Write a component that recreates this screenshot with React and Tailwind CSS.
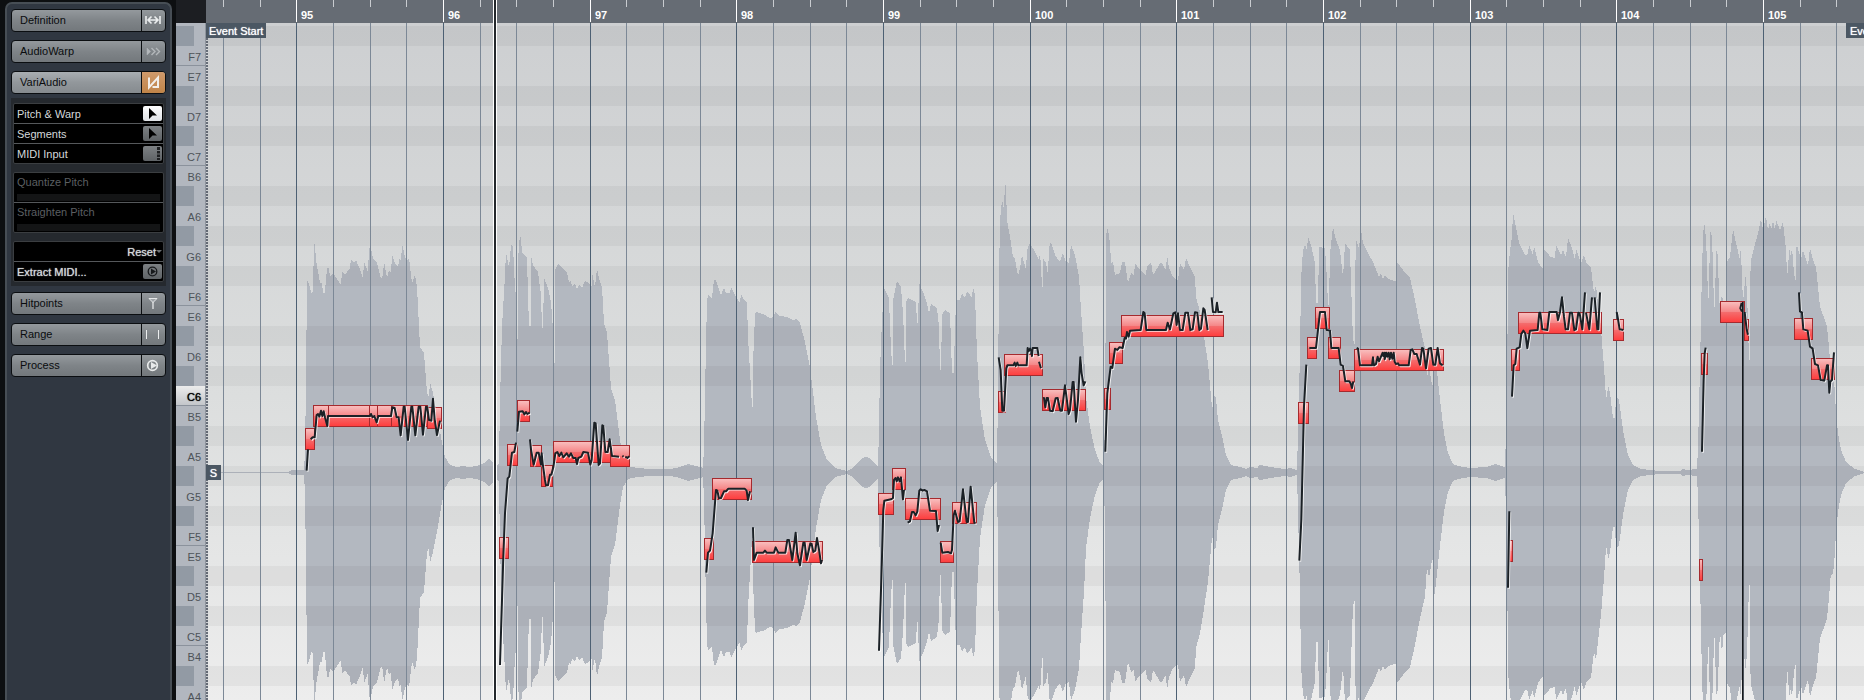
import React from "react";

/* Timeline geometry: the roll starts at x = 206, y = 23 of the window. */
const LEFT = 206;
const TOP = 23;
const MID = 472.5;
const beatX = (k) => 223 + Math.floor((k * 110) / 3 + 0.5);

/* One entry per grid line; every fourth one from the third opens a bar. */
const BEATS = Array.from({ length: 45 }, (_, k) => ({
  x: beatX(k),
  width: beatX(k + 1) - beatX(k),
  bar: k % 4 === 2 ? 95 + (k - 2) / 4 : null,
}));

const NAMES = ["B", "A#", "A", "G#", "G", "F#", "F", "E", "D#", "D", "C#", "C"];
const KEYS = Array.from({ length: 34 }, (_, i) => {
  const n = i + 5;
  return { name: NAMES[n % 12], octave: 7 - Math.floor(n / 12), y: 26 + i * 20 };
});

/* Upper edge of the waveform as x,y pairs; the lower edge mirrors it. */
const ENVELOPE = `208,472 288,472 292,470 304,470 305,452 306,382 307,280 309,284 312,295 313,290 314,242 315,245 316,260 320,283 322,283 323,293 325,293 326,277 328,265 330,276 333,273 337,279 341,285 342,271 345,275 350,268 351,259 354,263 356,260 359,267 361,272 363,279 364,262 368,272 369,248 371,248 373,258 377,263 381,279 383,275 384,261 387,278 389,270 391,273 392,255 395,263 398,267 400,257 401,262 402,244 403,248 405,257 407,260 409,258 412,283 415,275 417,287 420,347 424,353 427,393 429,397 430,382 433,393 437,413 442,443 445,457 450,465 457,467 462,466 470,467 480,465 484,463 489,459 493,463 496,468
499,463 500,400 502,327 505,275 506,252 509,268 511,245 513,247 514,267 515,288 516,295 517,339 518,339 518,260 520,234 521,240 522,252 527,258 528,295 529,326 531,326 531,255 533,265 538,272 541,295 542,328 543,328 544,278 548,288 551,302 553,330 554,363 555,363 555,270 558,264 563,268 567,273 569,282 571,280 572,287 575,283 577,289 579,285 582,288 585,281 587,282 590,285 592,287 592,273 595,287 597,269 600,282 602,287 604,323 607,333 611,388 615,400 620,440 623,458 628,466 637,468 650,469 670,469 680,467 688,464 700,467 703,468
704,447 706,343 707,302 708,295 712,298 714,280 716,280 718,287 721,295 724,288 726,293 730,293 731,287 735,295 740,303 741,294 744,300 747,302 748,337 751,388 752,407 753,407 753,363 755,315 756,312 765,315 770,318 774,317 775,312 780,316 787,317 793,320 797,319 800,323 805,342 810,367 816,417 821,445 827,460 835,468 847,471 853,468 860,460 865,457 870,458 875,464 878,467
879,427 880,370 882,320 884,288 889,298 890,327 892,365 893,365 893,300 897,281 901,287 903,313 905,362 906,362 906,302 908,298 916,302 917,323 918,323 919,283 923,292 927,303 929,313 931,304 937,308 939,327 940,370 941,370 942,315 945,310 950,313 951,343 952,373 954,373 955,320 957,300 960,300 962,293 965,298 967,291 970,295 972,298 973,287 975,295 977,353 980,407 985,440 991,457 997,464
998,393 999,277 1000,220 1002,200 1003,203 1004,211 1005,180 1006,190 1007,220 1010,237 1013,257 1015,259 1018,276 1020,268 1022,255 1026,270 1027,250 1030,243 1035,252 1039,260 1040,253 1041,267 1042,287 1043,287 1043,258 1046,263 1048,275 1049,248 1051,242 1055,255 1060,262 1063,253 1066,262 1069,263 1071,245 1075,255 1079,277 1081,310 1084,353 1086,397 1090,427 1095,450 1100,463 1104,467
1105,413 1106,277 1106,240 1107,227 1108,230 1110,243 1111,263 1113,261 1115,275 1120,273 1122,262 1125,262 1128,283 1131,273 1134,275 1135,263 1140,270 1146,275 1147,266 1151,262 1153,275 1158,267 1161,262 1166,270 1167,255 1169,268 1173,277 1178,280 1180,263 1184,270 1186,258 1190,267 1195,277 1196,297 1200,312 1203,330 1208,363 1212,407 1213,407 1214,395 1216,398 1218,420 1223,440 1226,455 1231,465 1240,467 1246,469 1250,467 1258,468 1259,465 1266,466 1270,467 1285,469 1290,468 1297,470
1298,433 1300,353 1301,280 1303,250 1305,245 1307,250 1308,236 1311,245 1315,263 1316,303 1318,303 1319,247 1325,248 1327,280 1328,305 1329,305 1330,253 1333,227 1336,240 1340,250 1343,278 1345,243 1350,250 1351,283 1353,340 1355,345 1355,280 1356,240 1359,248 1361,229 1363,243 1368,253 1373,262 1379,277 1381,273 1383,279 1385,275 1388,279 1395,281 1396,281 1397,262 1403,270 1410,278 1415,300 1420,327 1425,348 1427,378 1429,367 1432,385 1433,385 1434,347 1436,362 1440,400 1444,433 1448,453 1453,464 1458,466 1470,468 1486,467 1495,464 1505,467
1507,397 1508,273 1510,250 1512,237 1513,212 1516,227 1519,243 1525,255 1528,254 1529,245 1533,255 1534,246 1538,262 1542,268 1543,268 1544,250 1548,253 1550,257 1555,258 1556,245 1561,255 1563,250 1566,257 1568,238 1572,248 1575,260 1576,248 1581,263 1584,255 1586,262 1591,268 1594,293 1596,285 1598,303 1601,330 1604,367 1606,397 1607,397 1608,385 1610,393 1613,418 1615,418 1616,397 1619,400 1623,430 1628,455 1633,465 1641,469 1660,471 1680,471 1682,469 1687,470 1697,469
1698,447 1699,407 1700,367 1702,267 1703,240 1704,220 1706,238 1707,263 1708,298 1709,298 1710,230 1712,237 1713,267 1714,307 1715,307 1716,250 1718,255 1719,300 1721,310 1722,285 1723,310 1726,313 1726,263 1730,257 1733,229 1736,243 1740,260 1741,242 1742,287 1744,300 1745,273 1747,290 1749,360 1750,360 1750,283 1751,260 1754,248 1758,233 1761,219 1763,230 1766,216 1768,230 1770,222 1771,230 1773,221 1775,230 1776,220 1780,230 1783,222 1786,250 1787,273 1788,273 1789,248 1791,257 1792,245 1793,263 1795,280 1796,280 1796,250 1797,245 1801,260 1803,250 1808,265 1810,248 1813,260 1816,267 1820,307 1825,320 1827,327 1829,347 1831,373 1832,368 1834,378 1836,413 1838,433 1841,450 1846,462 1855,469 1864,472`
  .trim()
  .split(/\s+/)
  .map((p) => p.split(",").map(Number));

const wavePath = () => {
  const upper = ENVELOPE.map(([x, y]) => `${x} ${y}`).join("L");
  const lower = [...ENVELOPE].reverse().map(([x, y]) => `${x} ${2 * MID - y}`).join("L");
  return `M${upper}L${lower}Z`;
};

/* Pitch segments: x, y, width. */
const SEGMENTS = [
  [305, 428, 10], [313, 405, 16], [328, 405, 42], [369, 405, 9], [377, 405, 15], [391, 405, 37], [427, 407, 15],
  [499, 537, 10], [507, 444, 11], [517, 400, 13], [530, 445, 12], [541, 465, 12], [553, 441, 58], [610, 445, 20],
  [704, 538, 10], [712, 478, 40], [752, 541, 71],
  [878, 493, 16], [892, 468, 14], [905, 498, 36], [940, 541, 14], [952, 502, 25],
  [998, 391, 8], [1004, 354, 39], [1042, 389, 44],
  [1104, 388, 7], [1109, 342, 14], [1121, 315, 103],
  [1298, 402, 11], [1307, 337, 10], [1315, 307, 15], [1328, 337, 13], [1339, 370, 16], [1354, 349, 90],
  [1508, 540, 5], [1511, 349, 9], [1518, 312, 84], [1613, 319, 11],
  [1701, 353, 7], [1699, 559, 4], [1720, 301, 25], [1744, 319, 5], [1794, 318, 19], [1811, 358, 24],
];

/* Pitch curves, in thirds of a pixel from each phrase's origin. */
const CURVES = [
  { x: 290, y: 180, d: "M50 872L54 808M62 778L68 772L74 772L80 705L84 702L88 710L93 692L97 708L101 694L105 712L112 738L114 708L240 708L243 702L248 712L253 708L260 727L265 708L303 708L307 682L314 684L320 712L326 712L332 766L341 680L344 680L354 780L364 680L367 680L376 766L386 680L391 680L399 764L408 680L412 682L417 720L424 722L429 656L434 718L441 765L450 722" },
  { x: 470, y: 380, d: "M90 855L100 530L105 400L113 295L118 290L126 218L133 216L138 188M142 155L147 95L158 94L163 103L168 96L172 102L179 98M180 178L183 208L191 254L200 218L206 218L213 254L215 220L218 250L225 300L228 316L234 316L240 284L244 284L250 262L256 220L262 216L268 228L274 218L280 232L290 220L297 230L303 220L310 234L317 234L321 252L325 234L334 230L340 216L354 218L361 254L365 240L373 128L377 130L386 255L390 250L397 136L400 138L406 216L413 216L419 178L426 228L447 230M457 228L461 230M466 230L472 234L478 229" },
  { x: 470, y: 380, d: "M709 578L714 518L720 512L728 460L738 330L742 332L747 355L753 354L762 334L768 334L775 326L824 326L830 332L834 360L840 334M849 442L852 540L860 518L880 518L885 512L890 518L912 518L917 502L922 512L925 518L946 518L952 480L957 480L967 540L977 458L982 520L990 556L1000 488L1004 488L1010 540L1021 490L1025 492L1030 516L1036 512L1041 474L1048 515L1053 550L1056 540" },
  { x: 690, y: 260, d: "M567 1172L574 960L580 750L583 722L603 718L609 714L612 660L617 654L620 664L624 652L629 664L633 652L639 718L642 690M653 788L660 784L666 756L671 756L677 766L682 755L688 692L692 688L698 692L703 690L711 694L720 752L738 753L743 813L747 795M752 848L757 878L774 876L783 880L786 870L791 766L795 752L804 786L809 784L819 688L830 786L834 786L842 680L848 740L853 788L857 790" },
  { x: 690, y: 260, d: "M926 292L932 330L937 452L942 452L949 325L952 316L970 316L974 308L977 318L982 308L985 316L1010 316L1013 264L1016 274L1020 266L1024 274L1026 288L1028 264L1042 264L1046 288M1047 305L1053 325M1059 415L1062 414L1066 442L1070 414L1074 414L1080 452L1088 454L1097 415L1103 414L1111 452L1116 452L1125 376L1136 462L1140 450L1148 366L1151 366L1158 485L1164 420L1171 292L1175 340L1181 376L1186 364" },
  { x: 980, y: 180, d: "M376 815L382 640L392 560L397 564L405 506L412 510L418 502L428 504L434 474L438 476L441 456L446 470L450 452L482 450L490 396L494 400L499 450L558 450L563 428L570 448L580 400L586 397L590 435L594 400L600 450L608 450L616 398L624 398L631 450L638 448L645 397L652 398L658 450L663 446L670 385L674 390L683 450M695 352L699 396L707 397L711 368L715 396L728 396" },
  { x: 1260, y: 220, d: "M118 1022L124 900L132 560L139 434M148 384L168 384L174 330L180 276L195 276L200 330L210 332L214 384L236 384L242 434L249 438L256 484L268 484L272 490L276 504L280 484M290 384L294 386L300 436L336 436L339 412L342 436L348 432L353 410L357 424L363 410L368 398L370 408L374 398L374 418L379 398L382 410L386 398L389 418L393 398L397 416L401 398L404 425L408 432L414 430L418 436L446 436L452 390L457 388L463 402L470 402L480 434L486 384L490 386L498 445L506 386L513 384L520 434L526 434L533 384L540 430L548 436" },
  { x: 1480, y: 200, d: "M84 1163L88 934M96 590L101 496L106 492L110 446L119 442L124 402L130 392L136 400L142 444L150 392L173 390L178 338L181 338L187 388L202 390L208 336L230 336L234 360L240 336L246 292L252 350L257 388L264 388L270 338L276 338L283 390L288 388L295 338L299 340L307 388L315 277M318 338L328 388L336 292M344 292L352 388L355 388L360 277M410 336L412 345L419 388L430 390" },
  { x: 1480, y: 200, d: "M666 755L671 540L674 460L677 443M785 308L781 325L786 335M794 336L800 388L804 404M957 277L960 334L966 338L970 388L983 392L990 440L998 446L1005 492L1014 496L1022 540L1033 542L1041 496L1044 496L1048 578L1051 545L1056 540L1062 457" },
];

function Roll() {
  return (
    <svg className="absolute inset-0 size-full" aria-label="Pitch curve editor" role="img">
      <defs>
        <linearGradient id="segment" x1="0" y1="0" x2="0" y2="1">
          <stop offset="0" stopColor="#f9c0c0" />
          <stop offset="0.5" stopColor="#f58586" />
          <stop offset="0.52" stopColor="#f46c6d" />
          <stop offset="1" stopColor="#ff3c3c" />
        </linearGradient>
      </defs>
      <g transform={`translate(${-LEFT} ${-TOP})`}>
        <path d={wavePath()} fill="#b3b8c0" shapeRendering="crispEdges" />
        {KEYS.filter((k) => k.name.endsWith("#")).map((k) => (
          <rect key={k.y} x={LEFT} y={k.y} width="100%" height="20" fill="#000" fillOpacity="0.04" />
        ))}
        {BEATS.map((b) => (
          <rect key={b.x} x={b.x} y={TOP} width="1" height="100%" fill={b.bar ? "#4d6073" : "#7c8896"} />
        ))}
        {SEGMENTS.map(([x, y, w]) => (
          <rect key={`${x}-${y}`} x={x + 0.5} y={y + 0.5} width={w - 1} height="21" fill="url(#segment)" stroke="#a52a2e" />
        ))}
        {CURVES.map((c, i) => (
          <g key={i} transform={`translate(${c.x} ${c.y}) scale(0.33333)`} fill="none" strokeLinejoin="round">
            <path d={c.d} stroke="#fff" strokeOpacity="0.85" strokeWidth="5" transform="translate(3 3)" />
            <path d={c.d} stroke="#1b2126" strokeWidth="6" />
          </g>
        ))}
        <rect x="1742" y="302" width="1" height="100%" fill="#15181b" />
        <rect x="1743" y="302" width="1" height="100%" fill="#4a5058" />
      </g>
    </svg>
  );
}

function Ruler() {
  return (
    <div className="flex h-[23px] shrink-0 overflow-hidden bg-[#666c74] pl-[17px]">
      {BEATS.map((b) => (
        <div key={b.x} className="flex shrink-0" style={{ width: b.width }}>
          <span className={b.bar ? "h-[22px] w-px shrink-0 bg-white" : "h-[7px] w-px shrink-0 bg-[#c9ccd0]"} />
          {b.bar && <span className="pt-[7px] pl-1 text-[11px] leading-4 font-bold text-white">{b.bar}</span>}
        </div>
      ))}
    </div>
  );
}

function Keyboard() {
  return (
    <div className="flex w-[30px] shrink-0 flex-col overflow-hidden border-r border-[#8f959e] bg-[#b2b7bf] pt-[3px]">
      {KEYS.map((k) => {
        if (k.name.endsWith("#")) return <div key={k.y} className="h-5 w-[18px] shrink-0 bg-[#929aa4]" />;
        const rule = k.name === "F" || k.name === "C" ? " border-b border-[#8b929c]" : "";
        const tone =
          k.name === "C" && k.octave === 6
            ? "bg-linear-to-b from-[#ececec] to-[#c3c6ca] text-black text-shadow-[0_0_1px_#000]"
            : "text-[#4e5358]";
        return (
          <div key={k.y} className={`h-5 shrink-0 pr-1 text-right text-[11px] leading-[22px] ${tone}${rule}`}>
            {k.name}
            {k.octave}
          </div>
        );
      })}
    </div>
  );
}

const ICONS = {
  definition: (
    <path d="M4 4v8M18 4v8M6 8h10M9.500 4.500L6 8l3.500 3.500M12.500 4.500L16 8l-3.500 3.500" stroke="#eceeef" strokeWidth="1.600" fill="none" />
  ),
  warp: (
    <g stroke="#b3b7ba" strokeWidth="1.400" fill="none">
      <path d="M5 5l3.500 3.500L5 12z" fill="#b3b7ba" strokeWidth="0.500" />
      <path d="M9.500 5l3.500 3.500-3.500 3.500M14 5l3.500 3.500L14 12" />
    </g>
  ),
  vari: <path d="M7 3.500v10L16 3.500v9.500h-5.500" stroke="#f3efea" strokeWidth="2" fill="none" />,
  hit: (
    <g stroke="#e6e8e9" fill="none">
      <path d="M7 3.500h8L11 7.500z" fill="#9fa4a8" />
      <path d="M11 7v7" strokeWidth="1.300" />
    </g>
  ),
  range: <path d="M4.500 4v9M16.500 4v9" stroke="#eceeef" fill="none" />,
  process: (
    <>
      <circle cx="10.500" cy="8.500" r="4.800" stroke="#e8eaeb" strokeWidth="1.700" fill="none" />
      <path d="M9 5l6 3.500L9 12z" fill="#e8eaeb" />
    </>
  ),
};

function SectionButton({ label, icon, active }) {
  return (
    <button
      className={
        "flex h-[23px] w-full shrink-0 overflow-hidden rounded-[4px] border border-[#0b0e11] text-left " +
        (active
          ? "bg-linear-to-b from-[#a9aeb2] via-[#92979b] via-50% to-[#868b8f]"
          : "bg-linear-to-b from-[#94999d] via-[#7f8488] via-50% to-[#73787c]")
      }
    >
      <span className="flex-1 pl-2 text-[11px] leading-5 text-[#0a0c0e]">{label}</span>
      <span className={"h-full w-6 border-l border-[#0b0e11]" + (active ? " bg-linear-to-b from-[#cf9a6c] to-[#c08448]" : "")}>
        <svg className="h-[21px] w-[22px]" viewBox="0 -2 22 21" aria-hidden="true">
          {ICONS[icon]}
        </svg>
      </span>
    </button>
  );
}

function ToolRow({ label, icon, bright, last }) {
  return (
    <button className={"flex w-full items-center justify-between pr-px pl-[3px] text-left" + (last ? " h-[19px]" : " h-5 border-b border-[#55585b]")}>
      <span
        className={
          "text-[11px] leading-4 text-[#d4d8db]" + (icon === "play" ? " text-shadow-[0_0_1px_#d4d8db]" : "")
        }
      >
        {label}
      </span>
      <span
        className={
          "h-[15px] w-[19px] rounded-[2px] " +
          (bright ? "bg-linear-to-b from-white to-[#dfe2e6]" : "bg-linear-to-b from-[#7d8184] to-[#5f6366]")
        }
      >
        <svg className="h-[15px] w-[19px]" viewBox="0 0 19 15" aria-hidden="true">
          {icon === "arrow" && <path d="M6 2v11l3.500-3.500L14 9.500z" fill="#000" />}
          {icon === "midi" && <path d="M14 1h3v3h-3zM14 5h3v2.500h-3zM14 8.500h3V11h-3zM14 12h3v2h-3z" fill="#1d1f21" />}
          {icon === "play" && (
            <>
              <circle cx="9.500" cy="7.500" r="4.300" stroke="#17191b" strokeWidth="1.300" fill="none" />
              <path d="M8 4.500l5 3-5 3z" fill="#17191b" />
            </>
          )}
        </svg>
      </span>
    </button>
  );
}

function AmountRow({ label }) {
  return (
    <label className="flex h-[29px] flex-col justify-between px-[3px] pt-px text-[11px] leading-4 text-[#5b5f62]">
      {label}
      <input
        type="range"
        disabled
        defaultValue="0"
        className="mb-px block h-[7px] w-full appearance-none bg-[#141516] [&::-webkit-slider-thumb]:appearance-none"
      />
    </label>
  );
}

const BOX = "rounded-[2px] border border-[#3b3e41] bg-black";

function Inspector() {
  return (
    <aside className="flex w-44 shrink-0 bg-[#0d0f11] pt-[2px] pr-1 pl-[5px]">
      <div className="flex h-full w-full flex-col rounded-t-[7px] border-x-2 border-t-2 border-[#474e55] bg-[#303741] px-1 pt-[5px]">
        <div className="flex flex-col gap-2">
          <SectionButton label="Definition" icon="definition" />
          <SectionButton label="AudioWarp" icon="warp" />
          <SectionButton label="VariAudio" icon="vari" active />
        </div>
        <div className="mt-1 mb-[6px] flex flex-col gap-2 bg-[#25292e] px-[2px] pt-[5px] pb-1">
          <div className={BOX}>
            <ToolRow label="Pitch &amp; Warp" icon="arrow" bright />
            <ToolRow label="Segments" icon="arrow" />
            <ToolRow label="MIDI Input" icon="midi" last />
          </div>
          <div className={BOX}>
            <AmountRow label="Quantize Pitch" />
            <div className="h-px bg-[#55585b]" />
            <AmountRow label="Straighten Pitch" />
          </div>
          <div className={BOX}>
            <button className="flex h-5 w-full items-center justify-end border-b border-[#55585b] pr-px text-[11px] leading-4 text-[#d4d8db] text-shadow-[0_0_1px_#d4d8db]">
              Reset
              <svg className="h-1 w-[6px]" viewBox="0 0 6 4" aria-hidden="true">
                <path d="M0 0h6L3 3z" fill="#6d7174" />
              </svg>
            </button>
            <ToolRow label="Extract MIDI..." icon="play" last />
          </div>
        </div>
        <div className="flex flex-col gap-2">
          <SectionButton label="Hitpoints" icon="hit" />
          <SectionButton label="Range" icon="range" />
          <SectionButton label="Process" icon="process" />
        </div>
      </div>
    </aside>
  );
}

const TAG = "absolute bg-[#4b5763] text-[11px] leading-4 text-white text-shadow-[0_0_1px_#fff]";

export default function App() {
  return (
    <div className="flex h-screen w-full overflow-hidden bg-[#1b1e22] font-['Liberation_Sans',Arial,sans-serif]">
      <Inspector />
      <div className="flex shrink-0 flex-col">
        <div className="h-[23px] shrink-0 bg-[#1c1e22]" />
        <div className="flex min-h-0 flex-1">
          <Keyboard />
        </div>
      </div>
      <main className="relative flex min-w-0 flex-1 flex-col">
        <Ruler />
        <div className="relative min-h-0 flex-1 overflow-hidden bg-linear-to-b from-[#cdcfd1] via-[#dcdede] via-55% to-[#ededed]">
          <Roll />
          <div className="h-full w-[2px] bg-[repeating-linear-gradient(to_bottom,#666d78_0px,#666d78_2px,#d5d7d9_2px,#d5d7d9_3px)]" />
          <span className={`${TAG} top-0 left-0 h-[15px] w-[60px] pl-[3px]`}>Event Start</span>
          <span className={`${TAG} top-0 left-[1640px] h-[15px] w-[60px] pl-1`}>Event End</span>
          <span className={`${TAG} top-[442px] left-0 size-[15px] text-center`}>S</span>
        </div>
        <div className="absolute inset-y-0 left-[287px] w-1 border-x border-white bg-[#24282c]" />
      </main>
    </div>
  );
}
